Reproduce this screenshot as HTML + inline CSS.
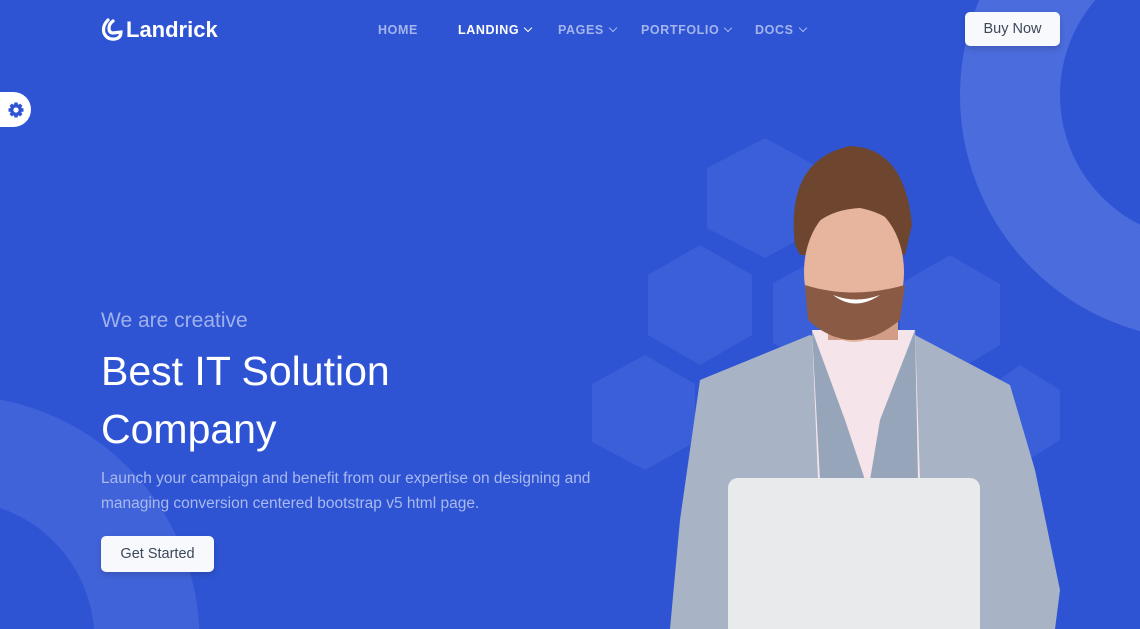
<!DOCTYPE html>
<html style="overflow:hidden"><head><meta charset="utf-8"><style>
*{margin:0;padding:0;box-sizing:border-box}
html,body{width:1140px;height:629px;overflow:hidden}
body{background:#2e54d4;font-family:"Liberation Sans",sans-serif;position:relative}
.abs{position:absolute}
.nav a{position:absolute;top:23px;font-size:12.5px;font-weight:bold;letter-spacing:.6px;color:#a4b5ee;text-decoration:none}
.nav a.act{color:#fff}
.chev{display:inline-block;width:6px;height:6px;border-right:1.5px solid currentColor;border-bottom:1.5px solid currentColor;transform:rotate(45deg);margin-left:6px;position:relative;top:-3px}
.btn{background:#f8f9fc;color:#3c4858;border-radius:5px;box-shadow:0 3px 6px rgba(0,0,0,.15);font-size:14.5px;display:flex;align-items:center;justify-content:center}
</style></head><body>
<svg class="abs" style="left:0;top:0" width="1140" height="629">
<circle cx="1205" cy="95" r="195" fill="none" stroke="#4a6cdc" stroke-width="100"/>
<circle cx="-45" cy="640" r="192" fill="none" stroke="#4063d9" stroke-width="105"/>
<g fill="#3a5fd9">
<polygon points="765,138 820,168 820,228 765,258 707,228 707,168"/>
<polygon points="700,245 752,275 752,335 700,365 648,335 648,275"/>
<polygon points="828,253 880,283 880,343 828,373 773,343 773,283"/>
<polygon points="645,355 695,384 695,442 645,470 592,442 592,384"/>
<polygon points="950,255 1000,284 1000,345 950,375 900,345 900,284"/>
<polygon points="1020,365 1060,390 1060,440 1020,465 985,440 985,390"/>
</g>
<path d="M700,380 L810,335 L860,360 L915,335 L1010,385 L1035,470 L1060,590 L1055,629 L670,629 L680,520 Z" fill="#a8b4c6"/>
<path d="M812,330 L915,330 L920,480 L818,480 Z" fill="#f5e4ea"/>
<path d="M812,330 L845,420 L865,480 L820,480 Z" fill="#97a5bb"/>
<path d="M915,330 L880,420 L870,480 L918,480 Z" fill="#97a5bb"/>
<rect x="828" y="290" width="70" height="50" fill="#d29c86"/>
<path d="M795,245 Q785,160 850,146 Q905,148 912,225 L905,255 L800,255 Z" fill="#6e4630"/>
<ellipse cx="854" cy="272" rx="50" ry="70" fill="#e7b49e"/>
<path d="M802,240 Q800,205 830,198 Q860,190 885,200 Q905,210 906,240 Q895,215 860,208 Q820,210 802,240 Z" fill="#6e4630"/>
<path d="M808,320 Q852,360 900,320 L905,285 Q852,300 805,285 Z" fill="#8a5a44"/>
<path d="M833,295 Q855,312 880,295 Q856,304 833,295" fill="#fff"/>
<rect x="728" y="478" width="252" height="160" rx="10" fill="#e9eaec"/>
</svg>
<div class="abs" style="left:101px;top:17px;color:#fff;font-size:22px;font-weight:bold;display:flex;align-items:center">
<svg width="22" height="24" viewBox="0 0 22 24" style="margin-right:3px"><path d="M7,2 Q1,8 3,15 Q6,22 14,21 Q20,20 20,14 L12,15 Q8,15 8,10 Q8,6 12,3" fill="none" stroke="#fff" stroke-width="3.2" stroke-linecap="round"/></svg>Landrick</div>
<div class="nav">
<a style="left:378px">HOME</a>
<a class="act" style="left:458px">LANDING<span class="chev"></span></a>
<a style="left:558px">PAGES<span class="chev"></span></a>
<a style="left:641px">PORTFOLIO<span class="chev"></span></a>
<a style="left:755px">DOCS<span class="chev"></span></a>
</div>
<div class="abs btn" style="left:965px;top:12px;width:95px;height:34px">Buy Now</div>
<div class="abs" style="left:0;top:92px;width:31px;height:35px;background:#fff;border-radius:0 18px 18px 0;display:flex;align-items:center;justify-content:center">
<svg width="18" height="18" viewBox="0 0 18 18"><g fill="#2e54d4"><circle cx="9" cy="9" r="6"/><g stroke="#2e54d4" stroke-width="3.5"><line x1="9" y1="1.5" x2="9" y2="16.5"/><line x1="1.5" y1="9" x2="16.5" y2="9"/><line x1="3.7" y1="3.7" x2="14.3" y2="14.3"/><line x1="14.3" y1="3.7" x2="3.7" y2="14.3"/></g></g><circle cx="9" cy="9" r="2.6" fill="#fff"/></svg></div>
<div class="abs" style="left:101px;top:309px;font-size:21px;color:#9fb1ec">We are creative</div>
<div class="abs" style="left:101px;top:342px;font-size:41px;line-height:58px;color:#fff">Best IT Solution<br>Company</div>
<div class="abs" style="left:101px;top:467px;font-size:15.5px;line-height:24.5px;color:#a9b9ee;width:520px">Launch your campaign and benefit from our expertise on designing and managing conversion centered bootstrap v5 html page.</div>
<div class="abs btn" style="left:101px;top:536px;width:113px;height:36px">Get Started</div>
</body></html>
